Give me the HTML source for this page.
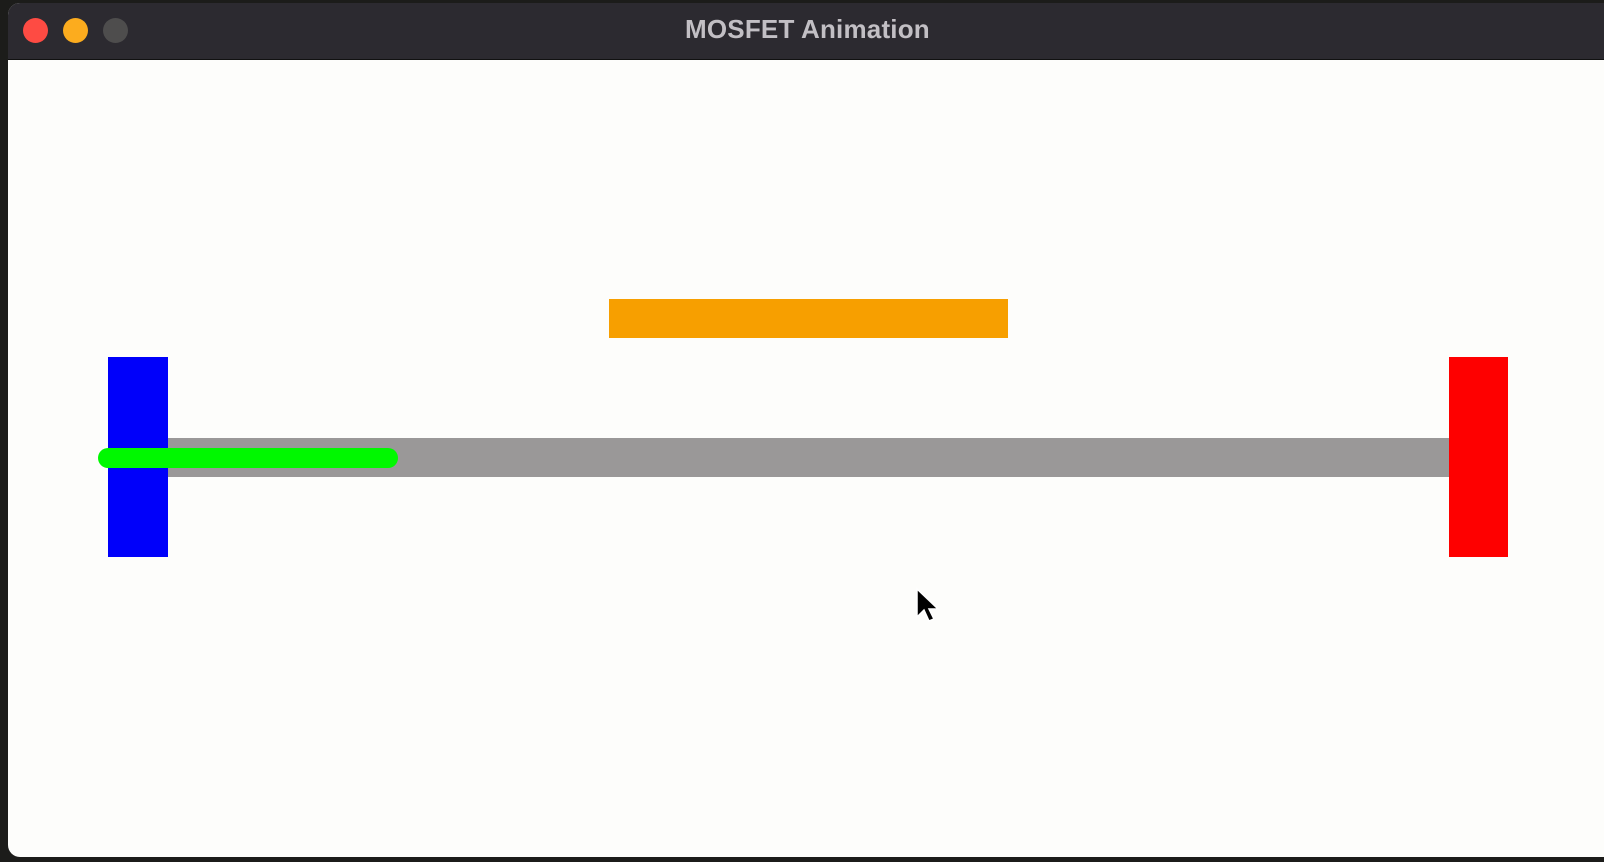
<!DOCTYPE html>
<html><head><meta charset="utf-8"><style>
html,body{margin:0;padding:0;width:1604px;height:862px;overflow:hidden;background:#1c1c1a;position:relative;font-family:"Liberation Sans",sans-serif}
.win{position:absolute;left:8px;top:3px;width:1610px;height:854px;background:#fdfdfb;border-radius:12px;overflow:hidden}
.tb{position:absolute;left:0;top:0;width:100%;height:56px;background:#2c2a30;border-bottom:1px solid #111}
.dot{position:absolute;width:25px;height:25px;border-radius:50%;top:15px}
.title{position:absolute;left:677px;top:11px;font-weight:bold;font-size:26px;color:#c2bfc4;white-space:nowrap;letter-spacing:0.2px}
.r{position:absolute}
</style></head><body>
<div class="win">
 <div class="tb">
  <div class="dot" style="left:15px;background:#fe4b43"></div>
  <div class="dot" style="left:55px;background:#fcac1e"></div>
  <div class="dot" style="left:95px;background:#4e4d4d"></div>
  <div class="title">MOSFET Animation</div>
 </div>
</div>
<div class="r" style="left:609px;top:299px;width:399px;height:39px;background:#f79f00"></div>
<div class="r" style="left:168px;top:438px;width:1281px;height:39px;background:#9a9898"></div>
<div class="r" style="left:108px;top:357px;width:60px;height:200px;background:#0000fa"></div>
<div class="r" style="left:1449px;top:357px;width:59px;height:200px;background:#fe0000"></div>
<div class="r" style="left:98px;top:448px;width:300px;height:20px;background:#00f800;border-radius:10px"></div>
<svg class="r" style="left:911px;top:586px" width="34" height="40" viewBox="0 0 34 40">
<path d="M6 3 L6 31 L13 24 L18 35 L23 33 L18 23 L27 23 Z" fill="#000" stroke="#fff" stroke-width="1.5"/>
</svg>
</body></html>
